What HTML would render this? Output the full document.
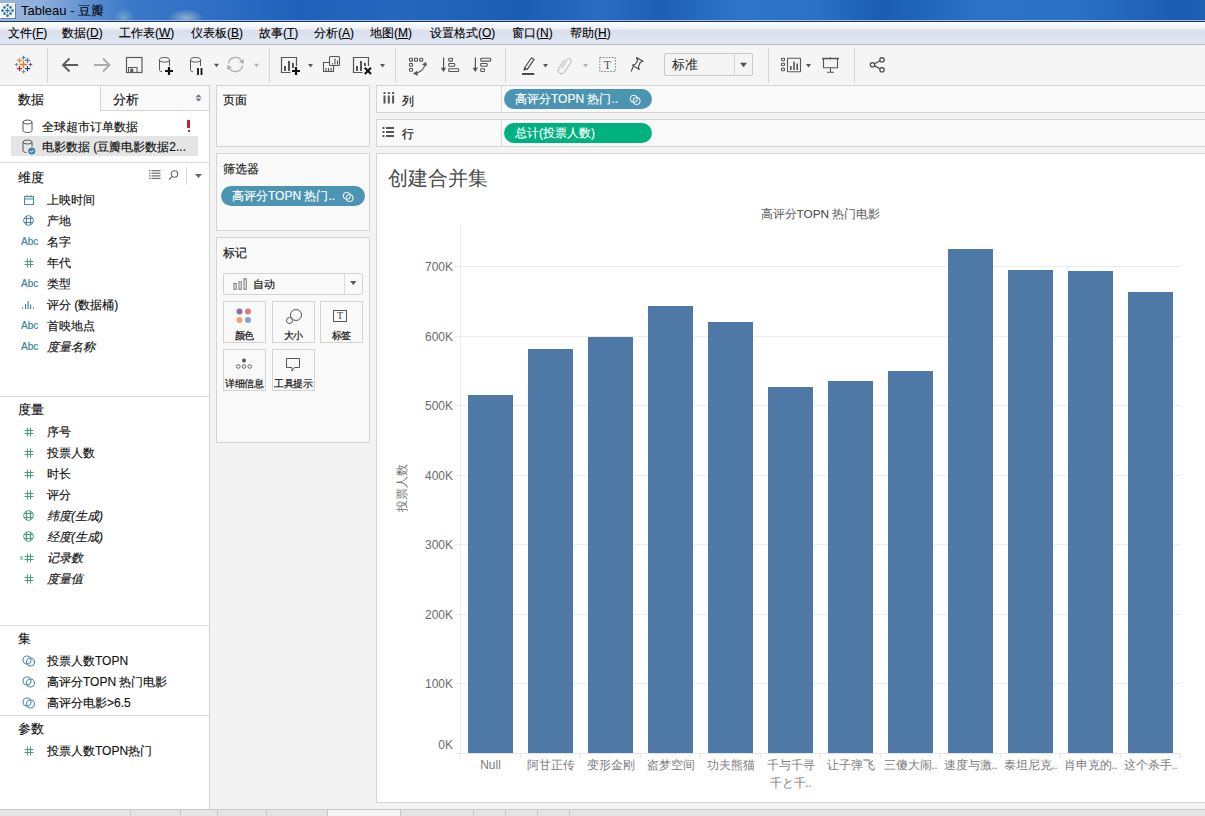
<!DOCTYPE html>
<html><head><meta charset="utf-8">
<style>
*{box-sizing:border-box;margin:0;padding:0}
html,body{width:1205px;height:816px;overflow:hidden;background:#f3f3f3;font-family:"Liberation Sans",sans-serif;color:#222}
.a{position:absolute}
#title{left:0;top:0;width:1205px;height:21px;border-bottom:1px solid #9fbde2;background:radial-gradient(ellipse 10px 10px at 124px 18px,rgba(180,225,200,.4),rgba(180,225,200,0)),radial-gradient(ellipse 18px 9px at 186px 18px,rgba(225,225,210,.55),rgba(225,225,210,0)),linear-gradient(90deg,#9cb6d8 0px,#8eb0dc 40px,#5f92d2 85px,#3a78c8 130px,#2e6dc4 220px,#1f61ba 300px,#2567bd 400px,#1c5db4 520px,#2a6cc2 600px,#1d5fb5 660px,#2f76c9 740px,#2b70c5 820px,#1a5db2 880px,#2c72c7 980px,#2a70c5 1080px,#1b5cb0 1180px,#1f60b3 1205px)}
#title .txt{left:21px;top:3px;font-size:13px;color:#000;line-height:15px}
#menu{left:0;top:21px;width:1205px;height:24px;background:linear-gradient(#fdfdfe 0px,#eef1f7 7px,#d9dfed 8px,#dce2ef 14px,#e1e6f2 22px);border-top:1px solid #1a365c;border-bottom:1px solid #b4bccb}
#menu span{position:absolute;top:3px;font-size:12px;line-height:16px;color:#000;-webkit-text-stroke:0.1px #000}
#menu u{text-decoration:underline}
#tool{left:0;top:45px;width:1205px;height:40px;background:#f5f5f5}
.sep{position:absolute;top:3px;width:1px;height:35px;background:#d6d6d6}
.dd{position:absolute;width:0;height:0;border-left:3.5px solid transparent;border-right:3.5px solid transparent;border-top:4px solid #555}
#left{left:0;top:85px;width:210px;height:724px;background:#fff;border-right:1px solid #d0d0d0}
.hl{position:absolute;left:0;width:209px;height:1px;background:#dcdcdc}
.it{position:absolute;font-size:12px;line-height:14px;color:#111;-webkit-text-stroke:0.15px #111;white-space:nowrap}
.ic{position:absolute}
.hd{position:absolute;left:18px;font-size:12.5px;line-height:14px;color:#111;-webkit-text-stroke:0.15px #111}
#mid{left:210px;top:85px;width:166px;height:724px;background:#f3f3f3}
.box{position:absolute;background:#f9f9f9;border:1px solid #d4d4d4}
.pill{position:absolute;border-radius:10px;color:#fff;font-size:12px;line-height:20px;white-space:nowrap}
#viz{left:376px;top:153px;width:829px;height:650px;background:#fff;border:1px solid #d4d4d4;border-right:none}
#tabs{left:0;top:809px;width:1205px;height:7px;background:#e5e5e5;border-top:1px solid #c8c8c8}
.ts{position:absolute;top:0;width:1px;height:7px;background:#c8c8c8}
.ser{font-family:"Liberation Serif",serif}
</style></head><body>
<!-- Title bar -->
<div id="title" class="a">
  <div class="a" style="left:1px;top:4px;width:15px;height:15px;background:#3d5f90;opacity:.6"></div>
<div class="a" style="left:0;top:3px;width:15px;height:15px;background:#fff"></div>
<div class="a" style="left:1px;top:4px;width:13px;height:13px;background:#f0f0f0"></div>
<svg class="a" style="left:0;top:0" width="16" height="20" viewBox="0 0 16 20"><g stroke="#2a7ab8" stroke-width="1.1" fill="none">
<path d="M7.5 8.2v4.8M5.1 10.6h4.8"/>
<path d="M7.5 4v2.6M6.2 5.3h2.6M7.5 14.3v2.6M6.2 15.6h2.6M2.5 9.3v2.6M1.2 10.6h2.6M12.5 9.3v2.6M11.2 10.6h2.6M4.5 6.1v2.6M3.2 7.4h2.6M10.5 6.1v2.6M9.2 7.4h2.6M4.5 12.3v2.6M3.2 13.6h2.6M10.5 12.3v2.6M9.2 13.6h2.6" stroke-width="1.5"/>
</g></svg>
<div class="a txt">Tableau - 豆瓣</div>
</div>
<!-- Menu -->
<div id="menu" class="a">
  <span style="left:8px">文件(<u>F</u>)</span>
  <span style="left:62px">数据(<u>D</u>)</span>
  <span style="left:119px">工作表(<u>W</u>)</span>
  <span style="left:191px">仪表板(<u>B</u>)</span>
  <span style="left:259px">故事(<u>T</u>)</span>
  <span style="left:314px">分析(<u>A</u>)</span>
  <span style="left:370px">地图(<u>M</u>)</span>
  <span style="left:430px">设置格式(<u>O</u>)</span>
  <span style="left:512px">窗口(<u>N</u>)</span>
  <span style="left:570px">帮助(<u>H</u>)</span>
</div>
<!-- Toolbar -->
<div id="tool" class="a">
  <div class="sep" style="left:47px"></div>
  <div class="sep" style="left:269px"></div>
  <div class="sep" style="left:395px"></div>
  <div class="sep" style="left:505px"></div>
  <div class="sep" style="left:768px"></div>
  <div class="sep" style="left:854px"></div>
</div>
<svg class="a" style="left:0;top:0" width="1205" height="85" viewBox="0 0 1205 85">
<g fill="none" stroke-linecap="butt">
<!-- tableau logo -->
<g stroke-width="1.2">
<path d="M23.5 60.5v7.5M19.8 64.5h7.5" stroke="#e8762b" stroke-width="1.3"/>
<path d="M23.5 55.8v3.6M21.7 57.6h3.6" stroke="#5b879b"/>
<path d="M23.5 69.8v3.6M21.7 71.6h3.6" stroke="#7e8fbf"/>
<path d="M16.5 62.7v3.6M14.7 64.5h3.6" stroke="#6f98a6"/>
<path d="M30.5 62.7v3.6M28.7 64.5h3.6" stroke="#5b5f97"/>
<path d="M19.5 57.8v5.2M16.9 60.4h5.2" stroke="#eb912b"/>
<path d="M27.5 57.8v5.2M24.9 60.4h5.2" stroke="#4e7f9e"/>
<path d="M19.5 66v5.2M16.9 68.6h5.2" stroke="#c72035"/>
<path d="M27.5 66v5.2M24.9 68.6h5.2" stroke="#1f447e"/>
</g>
<!-- back / forward -->
<path d="M63 65h15M69.5 58.5L63 65l6.5 6.5" stroke="#5c5c5c" stroke-width="1.9"/>
<path d="M94 65h15.5M103 58.5l6.5 6.5-6.5 6.5" stroke="#ababab" stroke-width="1.9"/>
<!-- save -->
<rect x="126.5" y="57.5" width="15.5" height="15" stroke="#5c5c5c" stroke-width="1.2"/>
<path d="M128.5 72.5v-5h8.5v5" stroke="#5c5c5c" stroke-width="1.1"/>
<rect x="130.3" y="68.6" width="3" height="3.6" fill="#5c5c5c" stroke="none"/>
<!-- db+ -->
<g stroke="#555" stroke-width="1">
<ellipse cx="164.5" cy="59.8" rx="5" ry="2.3"/>
<path d="M159.5 59.8v10c0 1.2 1 1.8 2.5 2M169.5 59.8v6.2"/>
</g>
<path d="M169 67v8M165 71h8" stroke="#111" stroke-width="2.2"/>
<!-- db || -->
<g stroke="#555" stroke-width="1">
<ellipse cx="195.5" cy="59.8" rx="5" ry="2.3"/>
<path d="M190.5 59.8v10c0 1.2 1 1.8 2.5 2M200.5 59.8v6.2"/>
</g>
<path d="M198 68v7M201.5 68v7" stroke="#111" stroke-width="1.8"/>
<path d="M214 63.8h5l-2.5 3.4z" fill="#555" stroke="none"/>
<!-- refresh -->
<g stroke="#b0b0b0" stroke-width="1.4">
<path d="M228.5 63.5a7 7 0 0 1 13.2 -2.2"/>
<path d="M242.5 65.5a7 7 0 0 1 -13.2 2.2"/>
</g>
<path d="M244 59l-0.5 5-4.5-2z M227 70l0.5-5 4.5 2z" fill="#b0b0b0" stroke="none"/>
<path d="M254 63.8h5l-2.5 3.4z" fill="#b0b0b0" stroke="none"/>
<!-- new worksheet -->
<g stroke="#555" stroke-width="1.2">
<path d="M290.5 72.5h-9v-15h15v8.5"/>
</g>
<rect x="284" y="66" width="2" height="5" fill="#555"/><rect x="288" y="61" width="2" height="10" fill="#555"/><rect x="292" y="63" width="2" height="5" fill="#555"/>
<path d="M296 67v8M292 71h8" stroke="#111" stroke-width="2.2"/>
<path d="M308 64h5l-2.5 3.4z" fill="#555" stroke="none"/>
<!-- duplicate -->
<g stroke="#555" stroke-width="1.1">
<rect x="329.5" y="56.5" width="10" height="9" rx="1"/>
<path d="M329 62.5h-5.5v9h10v-5.5"/>
</g>
<path d="M332.5 63v1.5M335 58.5v6M337.5 60.5v4M326 68v3M328.5 68v3M331 68v3" stroke="#555" stroke-width="1.1"/>
<!-- clear -->
<g stroke="#555" stroke-width="1.2">
<path d="M362.5 72.5h-9v-15h15v8.5"/>
</g>
<rect x="356" y="66" width="2" height="5" fill="#555"/><rect x="360" y="61" width="2" height="10" fill="#555"/><rect x="364" y="63" width="2" height="3" fill="#555"/>
<path d="M364.8 67.8l6.2 6.2M371 67.8l-6.2 6.2" stroke="#111" stroke-width="2.1"/>
<path d="M380 64h5l-2.5 3.4z" fill="#555" stroke="none"/>
<!-- swap -->
<g stroke="#555" stroke-width="1.1">
<rect x="409.5" y="58.3" width="3" height="2.8" rx="0.6"/><rect x="414.5" y="58.3" width="3" height="2.8" rx="0.6"/><rect x="419.7" y="58.3" width="3" height="2.8" rx="0.6"/>
<rect x="409.5" y="63.5" width="3" height="2.8" rx="0.6"/><rect x="409.5" y="68.5" width="3" height="2.8" rx="0.6"/>
<path d="M415.5 73a10 10 0 0 0 9.3-8.2"/>
</g>
<path d="M425.8 62.5l-3.2 2 3.9 1.1z M413.5 73.5l3.6-2.1 0.2 3.9z" fill="#555" stroke="#555" stroke-width="0.8"/>
<!-- sort asc -->
<path d="M443.6 57.5v11.5" stroke="#555" stroke-width="1.2"/>
<path d="M440.8 67.8h5.4l-2.7 4.2z" fill="#555"/>
<g stroke="#555" stroke-width="1.1">
<rect x="448.7" y="58.3" width="3.8" height="2.8" rx="0.8"/><rect x="448.7" y="63.5" width="6" height="2.8" rx="0.8"/><rect x="448.7" y="68.7" width="10" height="2.8" rx="0.8"/>
</g>
<!-- sort desc -->
<path d="M475.4 57.5v11.5" stroke="#555" stroke-width="1.2"/>
<path d="M472.6 67.8h5.4l-2.7 4.2z" fill="#555"/>
<g stroke="#555" stroke-width="1.1">
<rect x="480.7" y="58.3" width="10" height="2.8" rx="0.8"/><rect x="480.7" y="63.5" width="6.5" height="2.8" rx="0.8"/><rect x="480.7" y="68.7" width="3.8" height="2.8" rx="0.8"/>
</g>
<!-- pen -->
<path d="M531.5 57.8l2.6 1.6-6.8 10-2.6-1.6z M524.7 67.8l-0.6 2.3 2 -0.9" stroke="#444" stroke-width="1.1" stroke-linejoin="round"/>
<rect x="522" y="73" width="12.3" height="1.9" fill="#444"/>
<path d="M543 64h5l-2.5 3.4z" fill="#555" stroke="none"/>
<!-- paperclip -->
<path d="M561.5 68.5l5.5-9a2.4 2.4 0 0 1 4.1 2.4l-6.8 10.5a3.4 3.4 0 0 1-5.8-3.5l5.8-9" stroke="#b4b4b4" stroke-width="1"/>
<path d="M583 64h5l-2.5 3.4z" fill="#b4b4b4" stroke="none"/>
<!-- T box -->
<rect x="599.8" y="57.5" width="15.5" height="14" stroke="#777" stroke-width="0.9" stroke-dasharray="1.6 1.4"/>
<!-- pin -->
<path d="M636.5 57.5l6.5 3.8-2.8 1.2-1.8 4.5 0.8 2.5-6.8-4.4 2.6-0.6 2.6-3.8z M633.2 66.5l-2 5" stroke="#444" stroke-width="1.1" stroke-linejoin="round"/>
<!-- show me -->
<g stroke="#555" stroke-width="1.1">
<rect x="781.5" y="58.3" width="3" height="2.4" rx="0.6"/><rect x="781.5" y="63.3" width="3" height="2.4" rx="0.6"/><rect x="781.5" y="68.3" width="3" height="2.4" rx="0.6"/>
<rect x="787.5" y="58.3" width="13" height="13.4" rx="0.4"/>
</g>
<rect x="790" y="66" width="1.6" height="4" fill="#555"/><rect x="793.2" y="61.5" width="1.6" height="8.5" fill="#555"/><rect x="796.4" y="63.5" width="1.6" height="6.5" fill="#555"/>
<path d="M806 64h5l-2.5 3.4z" fill="#555" stroke="none"/>
<!-- presentation -->
<g stroke="#555" stroke-width="1.1">
<path d="M822 58.5h17M823.5 59v8.7h14v-8.7M830.5 67.7v4.2M827 72.3h7"/>
</g>
<rect x="822" y="57.8" width="17" height="1.5" fill="#555"/>
<path d="M830.5 57v1" stroke="#555" stroke-width="1"/>
<!-- share -->
<g stroke="#444" stroke-width="1.2">
<circle cx="882" cy="59.8" r="2.2"/><circle cx="882" cy="69.8" r="2.2"/><circle cx="872.5" cy="64.8" r="2.2"/>
<path d="M874.5 63.7l5.6-2.9M874.5 65.9l5.6 2.9"/>
</g>
</g>
</svg>
<div class="a" style="left:664px;top:53px;width:89px;height:23px;border:1px solid #cacaca;border-radius:2px;background:#f4f4f4"></div>
<div class="a" style="left:734px;top:54px;width:1px;height:21px;background:#dadada"></div>
<svg class="a" style="left:740px;top:62px" width="8" height="6"><path d="M0 0.8h7l-3.5 4.4z" fill="#555"/></svg>
<div class="a" style="left:672px;top:57px;font-size:13px;line-height:16px;color:#222">标准</div>
<div class="a ser" style="left:600px;top:58px;width:15px;text-align:center;font-size:12px;line-height:14px;color:#555">T</div>

<!-- Left panel -->
<div id="left" class="a">
  <div class="a" style="left:100px;top:0;width:109px;height:26px;background:#f9f9f9;border-left:1px solid #d4d4d4;border-bottom:1px solid #d4d4d4"></div>
  <div class="hl" style="top:0;background:#d4d4d4"></div>
  <div class="hd" style="left:18px;top:8px;font-size:13px">数据</div>
  <div class="hd" style="left:113px;top:8px;font-size:13px">分析</div>
  <svg class="ic" style="left:195px;top:9px" width="7" height="9"><path d="M0.5 3.2h6L3.5 0.2z M0.5 4.6h6L3.5 7.6z" fill="#6b7680"/></svg>
  <!-- datasources -->
  <svg class="ic" style="left:22px;top:34px" width="12" height="15"><g fill="none" stroke="#555" stroke-width="1"><ellipse cx="5.5" cy="3" rx="4.5" ry="2"/><path d="M1 3v8.5c0 1.2 2 2 4.5 2s4.5-.8 4.5-2V3"/></g></svg>
  <div class="it" style="left:42px;top:35px">全球超市订单数据</div>
  <div class="a" style="left:187px;top:35px;width:3px;height:8px;background:#c8202e"></div>
  <div class="a" style="left:187.5px;top:45px;width:2.5px;height:2px;background:#c8202e"></div>
  <div class="a" style="left:11px;top:51px;width:187px;height:20px;background:#e5e5e5"></div>
  <svg class="ic" style="left:22px;top:54px" width="14" height="16"><g fill="none" stroke="#555" stroke-width="1"><ellipse cx="5.5" cy="3" rx="4.5" ry="2"/><path d="M1 3v8.5c0 1.2 1.5 2 3.5 2M10 3v4.5"/></g><circle cx="9.8" cy="12" r="3.6" fill="#3f86ad"/><path d="M8 12l1.3 1.3 2.4-2.4" stroke="#fff" stroke-width="1" fill="none"/></svg>
  <div class="it" style="left:42px;top:55px">电影数据 (豆瓣电影数据2...</div>
  <div class="hl" style="top:77px"></div>
  <div class="hd" style="top:86px">维度</div>
  <svg class="ic" style="left:149px;top:85px" width="12" height="10"><g fill="#777"><rect x="0" y="0" width="1.5" height="1.3"/><rect x="0" y="2.6" width="1.5" height="1.3"/><rect x="0" y="5.2" width="1.5" height="1.3"/><rect x="0" y="7.8" width="1.5" height="1.3"/><rect x="2.5" y="0" width="9" height="1.3"/><rect x="2.5" y="2.6" width="9" height="1.3"/><rect x="2.5" y="5.2" width="9" height="1.3"/><rect x="2.5" y="7.8" width="9" height="1.3"/></g></svg>
  <svg class="ic" style="left:168px;top:85px" width="11" height="11"><g fill="none" stroke="#666" stroke-width="1.1"><circle cx="6.5" cy="4" r="3.2"/><path d="M4.2 6.3L1 9.5"/></g></svg>
  <div class="a" style="left:186px;top:82px;width:1px;height:18px;background:#d8d8d8"></div>
  <svg class="ic" style="left:195px;top:89px" width="8" height="5"><path d="M0 0h7l-3.5 4z" fill="#666"/></svg>
<svg class="ic" style="left:23px;top:109px" width="12" height="12"><g fill="none" stroke="#4a8aa8" stroke-width="1"><rect x="1.5" y="2.5" width="9" height="8"/><path d="M1.5 5h9M4 1v2.5M8 1v2.5"/></g></svg><div class="it" style="left:47px;top:108px;">上映时间</div>
<svg class="ic" style="left:23px;top:130px" width="12" height="12"><g fill="none" stroke="#4a8aa8" stroke-width="1"><circle cx="5.5" cy="5.5" r="4.8"/><path d="M3.5 1v9M7.5 1v9M1 3.5h9M1 7.5h9"/></g></svg><div class="it" style="left:47px;top:129px;">产地</div>
<div class="a" style="left:21px;top:151px;font-size:10px;line-height:12px;color:#3c7ea0;-webkit-text-stroke:0.2px #3c7ea0">Abc</div><div class="it" style="left:47px;top:150px;">名字</div>
<svg class="ic" style="left:24px;top:173px" width="10" height="10"><path d="M3.5 0.5v9M6.5 0.5v9M0.5 3.5h9M0.5 6.5h9" stroke="#46a07a" stroke-width="1" fill="none"/></svg><div class="it" style="left:47px;top:171px;">年代</div>
<div class="a" style="left:21px;top:193px;font-size:10px;line-height:12px;color:#3c7ea0;-webkit-text-stroke:0.2px #3c7ea0">Abc</div><div class="it" style="left:47px;top:192px;">类型</div>
<svg class="ic" style="left:21px;top:215px" width="14" height="10"><g fill="#4a8aa8"><rect x="1" y="7.5" width="1.2" height="1.5"/><rect x="4" y="4" width="1.2" height="5"/><rect x="6.5" y="1" width="1.2" height="8"/><rect x="9" y="4.5" width="1.2" height="4.5"/><rect x="11.8" y="7.5" width="1.2" height="1.5"/></g></svg><div class="it" style="left:47px;top:213px;">评分 (数据桶)</div>
<div class="a" style="left:21px;top:235px;font-size:10px;line-height:12px;color:#3c7ea0;-webkit-text-stroke:0.2px #3c7ea0">Abc</div><div class="it" style="left:47px;top:234px;">首映地点</div>
<div class="a" style="left:21px;top:256px;font-size:10px;line-height:12px;color:#3c7ea0;-webkit-text-stroke:0.2px #3c7ea0">Abc</div><div class="it" style="left:47px;top:255px; font-style:italic;">度量名称</div>
<div class="hl" style="top:311px"></div>
<div class="hd" style="top:318px">度量</div>
<svg class="ic" style="left:24px;top:342px" width="10" height="10"><path d="M3.5 0.5v9M6.5 0.5v9M0.5 3.5h9M0.5 6.5h9" stroke="#46a07a" stroke-width="1" fill="none"/></svg><div class="it" style="left:47px;top:340px;">序号</div>
<svg class="ic" style="left:24px;top:363px" width="10" height="10"><path d="M3.5 0.5v9M6.5 0.5v9M0.5 3.5h9M0.5 6.5h9" stroke="#46a07a" stroke-width="1" fill="none"/></svg><div class="it" style="left:47px;top:361px;">投票人数</div>
<svg class="ic" style="left:24px;top:384px" width="10" height="10"><path d="M3.5 0.5v9M6.5 0.5v9M0.5 3.5h9M0.5 6.5h9" stroke="#46a07a" stroke-width="1" fill="none"/></svg><div class="it" style="left:47px;top:382px;">时长</div>
<svg class="ic" style="left:24px;top:405px" width="10" height="10"><path d="M3.5 0.5v9M6.5 0.5v9M0.5 3.5h9M0.5 6.5h9" stroke="#46a07a" stroke-width="1" fill="none"/></svg><div class="it" style="left:47px;top:403px;">评分</div>
<svg class="ic" style="left:23px;top:425px" width="12" height="12"><g fill="none" stroke="#46a07a" stroke-width="1"><circle cx="5.5" cy="5.5" r="4.8"/><path d="M3.5 1v9M7.5 1v9M1 3.5h9M1 7.5h9"/></g></svg><div class="it" style="left:47px;top:424px; font-style:italic;">纬度(生成)</div>
<svg class="ic" style="left:23px;top:446px" width="12" height="12"><g fill="none" stroke="#46a07a" stroke-width="1"><circle cx="5.5" cy="5.5" r="4.8"/><path d="M3.5 1v9M7.5 1v9M1 3.5h9M1 7.5h9"/></g></svg><div class="it" style="left:47px;top:445px; font-style:italic;">经度(生成)</div>
<svg class="ic" style="left:20px;top:468px" width="14" height="10"><path d="M7.5 0.5v9M10.5 0.5v9M4.5 3.5h9M4.5 6.5h9M0 4h3M0 6h3" stroke="#46a07a" stroke-width="1" fill="none"/></svg><div class="it" style="left:47px;top:466px; font-style:italic;">记录数</div>
<svg class="ic" style="left:24px;top:489px" width="10" height="10"><path d="M3.5 0.5v9M6.5 0.5v9M0.5 3.5h9M0.5 6.5h9" stroke="#46a07a" stroke-width="1" fill="none"/></svg><div class="it" style="left:47px;top:487px; font-style:italic;">度量值</div>
<div class="hl" style="top:540px"></div>
<div class="hd" style="top:547px">集</div>
<svg class="ic" style="left:22px;top:570px" width="14" height="12"><g fill="none" stroke="#4a8aa8" stroke-width="1.1"><circle cx="5" cy="5" r="4"/><circle cx="8.5" cy="7" r="4"/></g></svg><div class="it" style="left:47px;top:569px">投票人数TOPN</div>
<svg class="ic" style="left:22px;top:591px" width="14" height="12"><g fill="none" stroke="#4a8aa8" stroke-width="1.1"><circle cx="5" cy="5" r="4"/><circle cx="8.5" cy="7" r="4"/></g></svg><div class="it" style="left:47px;top:590px">高评分TOPN 热门电影</div>
<svg class="ic" style="left:22px;top:612px" width="14" height="12"><g fill="none" stroke="#4a8aa8" stroke-width="1.1"><circle cx="5" cy="5" r="4"/><circle cx="8.5" cy="7" r="4"/></g></svg><div class="it" style="left:47px;top:611px">高评分电影&gt;6.5</div>
<div class="hl" style="top:630px"></div>
<div class="hd" style="top:637px">参数</div>
<svg class="ic" style="left:24px;top:661px" width="10" height="10"><path d="M3.5 0.5v9M6.5 0.5v9M0.5 3.5h9M0.5 6.5h9" stroke="#46a07a" stroke-width="1" fill="none"/></svg><div class="it" style="left:47px;top:659px">投票人数TOPN热门</div>
</div>
<!-- Middle -->
<div id="mid" class="a"></div>
<div class="box" style="left:216px;top:85px;width:154px;height:62px"></div>
<div class="it" style="left:223px;top:93px;font-size:12px">页面</div>
<div class="box" style="left:216px;top:153px;width:154px;height:78px"></div>
<div class="it" style="left:223px;top:162px;font-size:12px">筛选器</div>
<div class="pill" style="left:221px;top:186px;width:144px;height:20px;background:#4b95b3"></div>
<div class="it" style="left:232px;top:189px;color:#fff;-webkit-text-stroke:0.15px #fff">高评分TOPN 热门..</div>
<svg class="a" style="left:342px;top:191px" width="13" height="12"><g fill="none" stroke="#fff" stroke-width="1"><circle cx="4.8" cy="4.8" r="3.6"/><circle cx="7.6" cy="7" r="3.6"/></g></svg>
<div class="box" style="left:216px;top:237px;width:154px;height:206px"></div>
<div class="it" style="left:223px;top:246px;font-size:12px">标记</div>
<div class="a" style="left:223px;top:273px;width:140px;height:22px;background:#f9f9f9;border:1px solid #d2d2d2;border-radius:2px"></div>
<div class="a" style="left:344px;top:274px;width:1px;height:20px;background:#dcdcdc"></div>
<svg class="a" style="left:350px;top:281px" width="8" height="5"><path d="M0 0h6.5l-3.25 4z" fill="#555"/></svg>
<svg class="a" style="left:233px;top:278px" width="15" height="13"><g fill="none" stroke="#666" stroke-width="0.9"><rect x="1" y="5.5" width="2.2" height="5.8"/><rect x="6" y="3.8" width="2.2" height="7.5"/><rect x="11" y="0.8" width="2.2" height="10.5"/></g></svg>
<div class="it" style="left:253px;top:277px;font-size:11px">自动</div>
<div class="a" style="left:223px;top:301px;width:43px;height:42px;background:#f9f9f9;border:1px solid #d4d4d4"></div>
<div class="a" style="left:223px;top:330px;width:43px;text-align:center;font-size:9.5px;line-height:12px;color:#111;-webkit-text-stroke:0.2px #111;white-space:nowrap;letter-spacing:-0.3px">颜色</div>
<div class="a" style="left:272px;top:301px;width:43px;height:42px;background:#f9f9f9;border:1px solid #d4d4d4"></div>
<div class="a" style="left:272px;top:330px;width:43px;text-align:center;font-size:9.5px;line-height:12px;color:#111;-webkit-text-stroke:0.2px #111;white-space:nowrap;letter-spacing:-0.3px">大小</div>
<div class="a" style="left:320px;top:301px;width:43px;height:42px;background:#f9f9f9;border:1px solid #d4d4d4"></div>
<div class="a" style="left:320px;top:330px;width:43px;text-align:center;font-size:9.5px;line-height:12px;color:#111;-webkit-text-stroke:0.2px #111;white-space:nowrap;letter-spacing:-0.3px">标签</div>
<div class="a" style="left:223px;top:349px;width:43px;height:42px;background:#f9f9f9;border:1px solid #d4d4d4"></div>
<div class="a" style="left:223px;top:378px;width:43px;text-align:center;font-size:9.5px;line-height:12px;color:#111;-webkit-text-stroke:0.2px #111;white-space:nowrap;letter-spacing:-0.3px">详细信息</div>
<div class="a" style="left:272px;top:349px;width:43px;height:42px;background:#f9f9f9;border:1px solid #d4d4d4"></div>
<div class="a" style="left:272px;top:378px;width:43px;text-align:center;font-size:9.5px;line-height:12px;color:#111;-webkit-text-stroke:0.2px #111;white-space:nowrap;letter-spacing:-0.3px">工具提示</div>
<svg class="a" style="left:223px;top:301px" width="140" height="90">
<circle cx="16.5" cy="10.5" r="3" fill="#8a6fa0"/><circle cx="25" cy="10.5" r="3" fill="#e8747e"/><circle cx="16.5" cy="19" r="3" fill="#eea26f"/><circle cx="25" cy="19" r="3" fill="#7fa6cb"/>
<g fill="none" stroke="#555" stroke-width="1"><circle cx="73" cy="14" r="5.5"/><circle cx="66.5" cy="19.5" r="3" fill="#f9f9f9"/></g>
<rect x="110.5" y="9.5" width="13" height="11" fill="none" stroke="#555" stroke-width="1"/>
<circle cx="21" cy="59.5" r="2" fill="#555"/>
<g fill="none" stroke="#555" stroke-width="0.9"><circle cx="15.3" cy="65.5" r="1.8"/><circle cx="21" cy="65.5" r="1.8"/><circle cx="26.7" cy="65.5" r="1.8"/></g>
<path d="M63.5 57.5h13v9h-5l-2.5 3.5v-3.5h-5.5z" fill="none" stroke="#555" stroke-width="1" stroke-linejoin="round"/>
</svg>
<div class="a ser" style="left:333px;top:310px;width:14px;text-align:center;font-size:10px;line-height:12px;color:#444">T</div>

<!-- Shelves -->
<div class="box" style="left:376px;top:85px;width:829px;height:28px;border-right:none"></div>
<div class="a" style="left:501px;top:86px;width:1px;height:26px;background:#dadada"></div>
<svg class="a" style="left:383px;top:92px" width="12" height="12"><g fill="#555"><rect x="0.5" y="0" width="2" height="2"/><rect x="4.8" y="0" width="2" height="2"/><rect x="9.1" y="0" width="2" height="2"/><rect x="0.5" y="3.5" width="2" height="8"/><rect x="4.8" y="3.5" width="2" height="8"/><rect x="9.1" y="3.5" width="2" height="8"/></g></svg>
<div class="it" style="left:402px;top:94px;font-size:12px">列</div>
<div class="pill" style="left:504px;top:89px;width:148px;height:20px;background:#4b95b3"></div>
<div class="it" style="left:515px;top:92px;color:#fff;-webkit-text-stroke:0.15px #fff">高评分TOPN 热门..</div>
<svg class="a" style="left:629px;top:94px" width="13" height="12"><g fill="none" stroke="#fff" stroke-width="1"><circle cx="4.8" cy="4.8" r="3.6"/><circle cx="7.6" cy="7" r="3.6"/></g></svg>
<div class="box" style="left:376px;top:119px;width:829px;height:28px;border-right:none"></div>
<div class="a" style="left:501px;top:120px;width:1px;height:26px;background:#dadada"></div>
<svg class="a" style="left:382px;top:126px" width="13" height="12"><g fill="#555"><rect x="0.5" y="1" width="2" height="2"/><rect x="0.5" y="5" width="2" height="2"/><rect x="0.5" y="9" width="2" height="2"/><rect x="4" y="1" width="8" height="2"/><rect x="4" y="5" width="8" height="2"/><rect x="4" y="9" width="8" height="2"/></g></svg>
<div class="it" style="left:402px;top:127px;font-size:12px">行</div>
<div class="pill" style="left:504px;top:123px;width:148px;height:20px;background:#00b180"></div>
<div class="it" style="left:515px;top:126px;color:#fff;-webkit-text-stroke:0.15px #fff">总计(投票人数)</div>

<!-- Viz -->
<div id="viz" class="a"></div>
<svg class="a" style="left:0;top:0" width="1205" height="816" viewBox="0 0 1205 816">
<rect x="455" y="683" width="726" height="1" fill="#ececec"/>
<rect x="455" y="614" width="726" height="1" fill="#ececec"/>
<rect x="455" y="544" width="726" height="1" fill="#ececec"/>
<rect x="455" y="475" width="726" height="1" fill="#ececec"/>
<rect x="455" y="405" width="726" height="1" fill="#ececec"/>
<rect x="455" y="336" width="726" height="1" fill="#ececec"/>
<rect x="455" y="266" width="726" height="1" fill="#ececec"/>
<rect x="455" y="753" width="726" height="1" fill="#e4e4e4"/>
<rect x="460" y="224" width="1" height="534" fill="#ececec"/>
<rect x="520" y="753" width="1" height="5" fill="#e6e6e6"/>
<rect x="580" y="753" width="1" height="5" fill="#e6e6e6"/>
<rect x="640" y="753" width="1" height="5" fill="#e6e6e6"/>
<rect x="700" y="753" width="1" height="5" fill="#e6e6e6"/>
<rect x="760" y="753" width="1" height="5" fill="#e6e6e6"/>
<rect x="820" y="753" width="1" height="5" fill="#e6e6e6"/>
<rect x="880" y="753" width="1" height="5" fill="#e6e6e6"/>
<rect x="940" y="753" width="1" height="5" fill="#e6e6e6"/>
<rect x="1000" y="753" width="1" height="5" fill="#e6e6e6"/>
<rect x="1060" y="753" width="1" height="5" fill="#e6e6e6"/>
<rect x="1120" y="753" width="1" height="5" fill="#e6e6e6"/>
<rect x="1180" y="753" width="1" height="5" fill="#e6e6e6"/>
<rect x="468" y="395" width="45" height="358" fill="#4e79a7"/>
<rect x="528" y="349" width="45" height="404" fill="#4e79a7"/>
<rect x="588" y="337" width="45" height="416" fill="#4e79a7"/>
<rect x="648" y="306" width="45" height="447" fill="#4e79a7"/>
<rect x="708" y="322" width="45" height="431" fill="#4e79a7"/>
<rect x="768" y="387" width="45" height="366" fill="#4e79a7"/>
<rect x="828" y="381" width="45" height="372" fill="#4e79a7"/>
<rect x="888" y="371" width="45" height="382" fill="#4e79a7"/>
<rect x="948" y="249" width="45" height="504" fill="#4e79a7"/>
<rect x="1008" y="270" width="45" height="483" fill="#4e79a7"/>
<rect x="1068" y="271" width="45" height="482" fill="#4e79a7"/>
<rect x="1128" y="292" width="45" height="461" fill="#4e79a7"/>
</svg>
<div class="a ser" style="left:388px;top:166px;font-size:20px;line-height:24px;color:#4a4a4a">创建合并集</div>
<div class="a" style="left:700px;top:207px;width:241px;text-align:center;font-size:11.8px;line-height:14px;color:#444"><span class="ser" style="color:#5a5a5a">高评分</span>TOPN <span class="ser" style="color:#5a5a5a">热门电影</span></div>
<div class="a" style="left:400px;top:737px;width:53px;text-align:right;font-size:12px;line-height:16px;color:#6a6a6a">0K</div>
<div class="a" style="left:400px;top:676px;width:53px;text-align:right;font-size:12px;line-height:16px;color:#6a6a6a">100K</div>
<div class="a" style="left:400px;top:607px;width:53px;text-align:right;font-size:12px;line-height:16px;color:#6a6a6a">200K</div>
<div class="a" style="left:400px;top:537px;width:53px;text-align:right;font-size:12px;line-height:16px;color:#6a6a6a">300K</div>
<div class="a" style="left:400px;top:468px;width:53px;text-align:right;font-size:12px;line-height:16px;color:#6a6a6a">400K</div>
<div class="a" style="left:400px;top:398px;width:53px;text-align:right;font-size:12px;line-height:16px;color:#6a6a6a">500K</div>
<div class="a" style="left:400px;top:329px;width:53px;text-align:right;font-size:12px;line-height:16px;color:#6a6a6a">600K</div>
<div class="a" style="left:400px;top:259px;width:53px;text-align:right;font-size:12px;line-height:16px;color:#6a6a6a">700K</div>
<div class="a ser" style="left:378px;top:481px;width:48px;text-align:center;font-size:11.5px;line-height:14px;color:#777;transform:rotate(-90deg);transform-origin:24px 7px">投票人数</div>
<div class="a" style="left:460.5px;top:758px;width:60px;text-align:center;font-size:12px;line-height:14px;color:#7c7c7c;white-space:nowrap">Null</div>
<div class="a ser" style="left:520.5px;top:758px;width:60px;text-align:center;font-size:12px;line-height:14px;color:#7c7c7c;white-space:nowrap">阿甘正传</div>
<div class="a ser" style="left:580.5px;top:758px;width:60px;text-align:center;font-size:12px;line-height:14px;color:#7c7c7c;white-space:nowrap">变形金刚</div>
<div class="a ser" style="left:640.5px;top:758px;width:60px;text-align:center;font-size:12px;line-height:14px;color:#7c7c7c;white-space:nowrap">盗梦空间</div>
<div class="a ser" style="left:700.5px;top:758px;width:60px;text-align:center;font-size:12px;line-height:14px;color:#7c7c7c;white-space:nowrap">功夫熊猫</div>
<div class="a ser" style="left:760.5px;top:758px;width:60px;text-align:center;font-size:12px;line-height:14px;color:#7c7c7c;white-space:nowrap">千与千寻</div>
<div class="a ser" style="left:820.5px;top:758px;width:60px;text-align:center;font-size:12px;line-height:14px;color:#7c7c7c;white-space:nowrap">让子弹飞</div>
<div class="a ser" style="left:880.5px;top:758px;width:60px;text-align:center;font-size:12px;line-height:14px;color:#7c7c7c;white-space:nowrap">三傻大闹..</div>
<div class="a ser" style="left:940.5px;top:758px;width:60px;text-align:center;font-size:12px;line-height:14px;color:#7c7c7c;white-space:nowrap">速度与激..</div>
<div class="a ser" style="left:1000.5px;top:758px;width:60px;text-align:center;font-size:12px;line-height:14px;color:#7c7c7c;white-space:nowrap">泰坦尼克..</div>
<div class="a ser" style="left:1060.5px;top:758px;width:60px;text-align:center;font-size:12px;line-height:14px;color:#7c7c7c;white-space:nowrap">肖申克的..</div>
<div class="a ser" style="left:1120.5px;top:758px;width:60px;text-align:center;font-size:12px;line-height:14px;color:#7c7c7c;white-space:nowrap">这个杀手..</div>
<div class="a ser" style="left:760.5px;top:776px;width:60px;text-align:center;font-size:12px;line-height:14px;color:#7c7c7c;white-space:nowrap">千と千..</div>
<!-- Tabs -->
<div id="tabs" class="a"><div class="ts" style="left:130px"></div><div class="ts" style="left:180px"></div><div class="ts" style="left:217px"></div><div class="ts" style="left:266px"></div><div class="ts" style="left:327px"></div><div class="ts" style="left:400px"></div><div class="ts" style="left:473px"></div><div class="ts" style="left:505px"></div><div class="ts" style="left:537px"></div><div class="ts" style="left:569px"></div><div class="a" style="left:328px;top:0;width:72px;height:7px;background:#f5f5f5"></div></div>
</body></html>
